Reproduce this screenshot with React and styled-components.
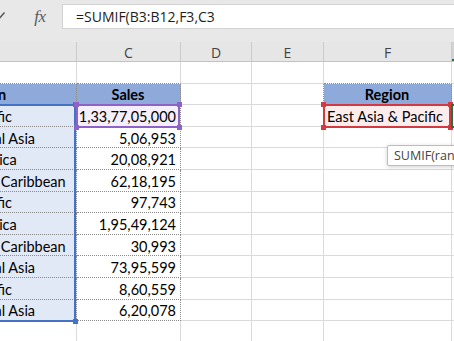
import React from 'react';
import styled, { createGlobalStyle } from 'styled-components';

const ROW_H = 21.6;

const GlobalStyle = createGlobalStyle`
  html, body {
    margin: 0;
    padding: 0;
  }
  body {
    background: #fff;
    overflow: hidden;
  }
`;

const Screen = styled.div`
  position: relative;
  width: 454px;
  height: 341px;
  overflow: hidden;
  background: #fff;
  font-family: Lato, 'Open Sans', sans-serif;
`;

const FormulaBar = styled.div`
  display: flex;
  align-items: flex-start;
  height: 42px;
  box-sizing: border-box;
  padding-top: 4px;
  background: #e8e8e8;
`;

const Tools = styled.div`
  display: flex;
  align-items: center;
  flex: none;
  width: 102px;
  height: 25px;
  margin-left: -40px;
  gap: 3px;
`;

const ToolButton = styled.div`
  display: flex;
  align-items: center;
  justify-content: center;
  width: 24px;
  height: 25px;
  color: #555;
`;

const FxButton = styled(ToolButton)`
  margin-left: 14px;
  font-family: 'Liberation Serif', serif;
  font-style: italic;
  font-size: 17px;
  color: #5a5a5a;
  letter-spacing: -0.5px;
`;

const FormulaInput = styled.div`
  flex: none;
  width: 420px;
  height: 25px;
  box-sizing: border-box;
  border: 1px solid #d2d2d2;
  background: #fff;
  padding-left: 13px;
  display: flex;
  align-items: center;
  font-family: 'Open Sans', sans-serif;
  font-size: 14px;
  color: #1e1e1e;
  white-space: nowrap;
`;

const Sheet = styled.div`
  margin-left: -107px;
  width: max-content;
`;

const HeaderRow = styled.div`
  display: flex;
  height: 20px;
  box-sizing: border-box;
  background: #e6e6e6;
  border-bottom: 1px solid #c3c3c3;
`;

const ColHead = styled.div`
  flex: none;
  box-sizing: border-box;
  width: ${(p) => p.$w}px;
  border-right: 1px solid #cbcbcb;
  display: flex;
  align-items: center;
  justify-content: center;
  padding-top: 1px;
  font-family: 'Open Sans', sans-serif;
  font-size: 14px;
  color: ${(p) => (p.$active ? '#1e6e42' : '#444')};
  background: ${(p) => (p.$active ? '#d3d3d3' : 'transparent')};
  border-bottom: ${(p) => (p.$active ? '2px solid #217346' : 'none')};
`;

const Row = styled.div`
  display: flex;
  height: ${ROW_H}px;
`;

const justify = { left: 'flex-start', center: 'center', right: 'flex-end' };

const Cell = styled.div`
  position: relative;
  flex: none;
  box-sizing: border-box;
  width: ${(p) => p.$w}px;
  height: 100%;
  padding: 2px 4px 0 3px;
  display: flex;
  align-items: center;
  justify-content: ${(p) => justify[p.$align || 'left']};
  background: ${(p) => p.$fill || 'transparent'};
  border-right: 1px ${(p) => (p.$dotRight ? 'dotted #8a8a8a' : 'solid #dadada')};
  border-bottom: 1px ${(p) => (p.$dotBottom ? 'dotted #8a8a8a' : 'solid #dadada')};
  font-size: 14.5px;
  font-weight: ${(p) => (p.$bold ? 700 : 400)};
  color: #000;
  white-space: nowrap;
`;

const Frame = styled.div`
  position: absolute;
  z-index: 2;
  top: -1px;
  left: -1px;
  right: 0;
  height: ${(p) => p.$rows * ROW_H + 2}px;
  box-sizing: border-box;
  border: 2px solid ${(p) => p.$color};
  pointer-events: none;
`;

const Handle = styled.span`
  position: absolute;
  width: 5px;
  height: 5px;
  background: ${(p) => p.$color};
  ${(p) => p.$v}: -4px;
  ${(p) => p.$h}: -4px;
`;

const Tooltip = styled.div`
  position: absolute;
  z-index: 5;
  left: 387px;
  top: 145px;
  height: 21px;
  box-sizing: border-box;
  padding: 0 6px;
  display: flex;
  align-items: center;
  background: #fff;
  border: 1px solid #bdbdbd;
  border-radius: 2px;
  box-shadow: 0 1px 4px rgba(0, 0, 0, 0.18);
  font-family: 'Open Sans', sans-serif;
  font-size: 12.5px;
  color: #444;
  white-space: nowrap;

  b {
    font-weight: 700;
  }
`;

const COLS = [
  { key: 'B', w: 184 },
  { key: 'C', w: 104 },
  { key: 'D', w: 71 },
  { key: 'E', w: 72 },
  { key: 'F', w: 128 },
  { key: 'G', w: 80 },
];

const BLUE = '#4472c4';
const PURPLE = '#8e62c9';
const RED = '#d23a3f';
const GREEN = '#217346';

const data = [
  ['East Asia & Pacific', '1,33,77,05,000'],
  ['Europe & Central Asia', '5,06,953'],
  ['Sub-Saharan Africa', '20,08,921'],
  ['Latin America & Caribbean', '62,18,195'],
  ['East Asia & Pacific', '97,743'],
  ['Sub-Saharan Africa', '1,95,49,124'],
  ['Latin America & Caribbean', '30,993'],
  ['Europe & Central Asia', '73,95,599'],
  ['East Asia & Pacific', '8,60,559'],
  ['Europe & Central Asia', '6,20,078'],
];

const corners = [
  ['top', 'left'],
  ['top', 'right'],
  ['bottom', 'left'],
  ['bottom', 'right'],
];

function RefFrame({ color, rows = 1, handles = corners }) {
  return (
    <Frame $color={color} $rows={rows}>
      {handles.map(([v, h]) => (
        <Handle key={v + h} $v={v} $h={h} $color={color} />
      ))}
    </Frame>
  );
}

function CheckIcon() {
  return (
    <svg width="14" height="14" viewBox="0 0 14 14" fill="none">
      <path d="M1.5 7.5 L5 11 L12.5 2.5" stroke="#555" strokeWidth="1.4" />
    </svg>
  );
}

function CrossIcon() {
  return (
    <svg width="12" height="12" viewBox="0 0 12 12" fill="none">
      <path d="M1.5 1.5 L10.5 10.5 M10.5 1.5 L1.5 10.5" stroke="#555" strokeWidth="1.4" />
    </svg>
  );
}

export default function App() {
  const [B, C, D, E, F, G] = COLS.map((c) => c.w);

  return (
    <Screen>
      <GlobalStyle />
      <FormulaBar>
        <Tools>
          <ToolButton>
            <CrossIcon />
          </ToolButton>
          <ToolButton>
            <CheckIcon />
          </ToolButton>
          <FxButton>fx</FxButton>
        </Tools>
        <FormulaInput>=SUMIF(B3:B12,F3,C3</FormulaInput>
      </FormulaBar>

      <Sheet>
        <HeaderRow>
          {COLS.map((c) => (
            <ColHead key={c.key} $w={c.w} $active={c.key === 'G'}>
              {c.key}
            </ColHead>
          ))}
        </HeaderRow>

        {/* row 1 */}
        <Row>
          <Cell $w={B} $dotBottom />
          <Cell $w={C} $dotBottom />
          <Cell $w={D} />
          <Cell $w={E} />
          <Cell $w={F} $dotBottom />
          <Cell $w={G} />
        </Row>

        {/* row 2: table headers */}
        <Row>
          <Cell $w={B} $fill="#8eaadb" $bold $align="center" $dotRight $dotBottom>
            Region
          </Cell>
          <Cell $w={C} $fill="#8eaadb" $bold $align="center" $dotRight $dotBottom>
            Sales
          </Cell>
          <Cell $w={D} />
          <Cell $w={E} $dotRight />
          <Cell $w={F} $fill="#8eaadb" $bold $align="center" $dotRight $dotBottom>
            Region
          </Cell>
          <Cell $w={G} />
        </Row>

        {data.map(([region, sales], i) => (
          <Row key={i}>
            <Cell $w={B} $fill="#e1e9f6" $dotRight $dotBottom>
              {i === 0 && (
                <RefFrame
                  color={BLUE}
                  rows={data.length}
                  handles={[
                    ['top', 'right'],
                    ['bottom', 'right'],
                  ]}
                />
              )}
              {region}
            </Cell>
            <Cell
              $w={C}
              $align="right"
              $fill={i === 0 ? '#f4effb' : undefined}
              $dotRight
              $dotBottom
            >
              {i === 0 && <RefFrame color={PURPLE} />}
              {sales}
            </Cell>
            <Cell $w={D} />
            <Cell $w={E} $dotRight={i === 0} />
            {i === 0 ? (
              <Cell $w={F} $fill="#fcecec" $dotRight $dotBottom>
                <RefFrame color={RED} />
                East Asia &amp; Pacific
              </Cell>
            ) : (
              <Cell $w={F} />
            )}
            <Cell $w={G}>{i === 0 && <RefFrame color={GREEN} handles={[]} />}</Cell>
          </Row>
        ))}

        <Row>
          <Cell $w={B} />
          <Cell $w={C} />
          <Cell $w={D} />
          <Cell $w={E} />
          <Cell $w={F} />
          <Cell $w={G} />
        </Row>
      </Sheet>

      <Tooltip>
        SUMIF(range, criteria, <b>[sum_range]</b>)
      </Tooltip>
    </Screen>
  );
}
